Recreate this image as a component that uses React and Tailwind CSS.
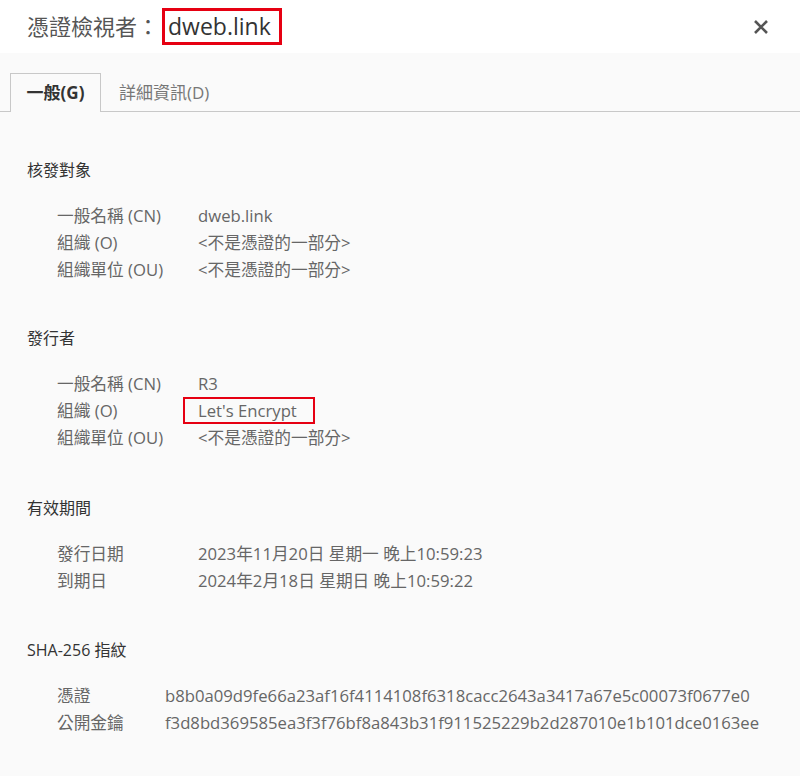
import { useState } from "react";

const FONT = { fontFamily: '"Open Sans", "Noto Sans CJK TC", sans-serif' };

const sections = [
  {
    title: "核發對象",
    labelW: "w-[141px]",
    gap: "mb-[45px]",
    rows: [
      ["一般名稱 (CN)", "dweb.link"],
      ["組織 (O)", "<不是憑證的一部分>"],
      ["組織單位 (OU)", "<不是憑證的一部分>"],
    ],
  },
  {
    title: "發行者",
    labelW: "w-[141px]",
    gap: "mb-[47px]",
    rows: [
      ["一般名稱 (CN)", "R3"],
      ["組織 (O)", "Let's Encrypt", true],
      ["組織單位 (OU)", "<不是憑證的一部分>"],
    ],
  },
  {
    title: "有效期間",
    labelW: "w-[141px]",
    gap: "mb-[46px]",
    rows: [
      ["發行日期", "2023年11月20日 星期一 晚上10:59:23"],
      ["到期日", "2024年2月18日 星期日 晚上10:59:22"],
    ],
  },
  {
    title: "SHA-256 指紋",
    labelW: "w-[108px]",
    gap: "",
    rows: [
      ["憑證", "b8b0a09d9fe66a23af16f4114108f6318cacc2643a3417a67e5c00073f0677e0"],
      ["公開金鑰", "f3d8bd369585ea3f3f76bf8a843b31f911525229b2d287010e1b101dce0163ee"],
    ],
  },
];

const Section = ({ title, labelW, gap, rows }) => (
  <div className={gap}>
    <div className="text-[16px] leading-[20px] text-[#333]">{title}</div>
    <div className="mt-[22px] pl-[30px]">
      {rows.map(([label, value, marked]) => (
        <div key={label} className="flex h-[27px] items-center whitespace-nowrap text-[16.7px] text-[#666]">
          <div className={`${labelW} shrink-0`}>{label}</div>
          {marked ? (
            <span className="-ml-[15px] box-border flex h-[27px] w-[132px] items-center border-2 border-[#e60012] pl-[13px]">
              {value}
            </span>
          ) : (
            <div>{value}</div>
          )}
        </div>
      ))}
    </div>
  </div>
);

export default function App() {
  const [tab, setTab] = useState(0);

  return (
    <div style={FONT} className="flex h-[776px] w-[800px] flex-col overflow-hidden bg-[#fafafa]">
      {/* header */}
      <div className="flex h-[53px] shrink-0 items-center justify-between bg-white pl-[27px] pr-[30px]">
        <div className="flex items-center text-[22px] text-[#555]">
          <span>憑證檢視者：</span>
          <span className="ml-[3px] flex h-[37px] items-center border-[3px] border-[#e60012] pl-[3px] pr-[8px] text-[23px] font-medium text-[#333]">
            dweb.link
          </span>
        </div>
        <svg width="18" height="18" viewBox="0 0 18 18" className="text-[#555]">
          <path d="M3 3L15 15M15 3L3 15" stroke="currentColor" strokeWidth="2.6" />
        </svg>
      </div>

      {/* tabs */}
      <div className="flex h-[59px] shrink-0 items-end border-b border-[#c8c8c8] pl-[10px] pt-[20px]">
        {["一般(G)", "詳細資訊(D)"].map((t, i) => (
          <button
            key={t}
            onClick={() => setTab(i)}
            className={
              i === tab
                ? "-mb-px flex h-[39px] w-[91px] items-center justify-center border border-b-0 border-[#c8c8c8] bg-[#fafafa] text-[17px] font-bold text-[#333]"
                : "-mb-px flex h-[39px] items-center px-[18px] text-[17px] text-[#777]"
            }
          >
            {t}
          </button>
        ))}
      </div>

      {/* content */}
      <div className="pl-[27px] pt-[48px]">
        {sections.map((s) => (
          <Section key={s.title} {...s} />
        ))}
      </div>
    </div>
  );
}
